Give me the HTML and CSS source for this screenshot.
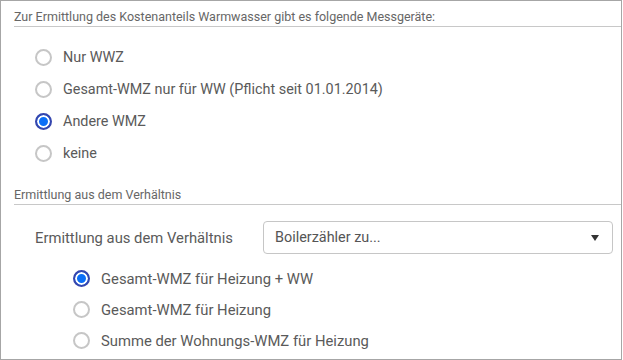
FILE: index.html
```html
<!DOCTYPE html>
<html lang="de">
<head>
  <meta charset="UTF-8" />
  <title>Messgeräte Warmwasser</title>
  <link rel="stylesheet" href="styles.css">
</head>
<body>
  <div class="panel">
    <div class="section-title">Zur Ermittlung des Kostenanteils Warmwasser gibt es folgende Messgeräte:</div>

    <div class="options">
      <label class="option"><input type="radio" name="geraet"> Nur WWZ</label>
      <label class="option"><input type="radio" name="geraet"> Gesamt-WMZ nur für WW (Pflicht seit 01.01.2014)</label>
      <label class="option"><input type="radio" name="geraet" checked> Andere WMZ</label>
      <label class="option"><input type="radio" name="geraet"> keine</label>
    </div>

    <div class="section-title second">Ermittlung aus dem Verhältnis</div>

    <div class="field-row">
      <label for="verhaeltnis" class="field-label">Ermittlung aus dem Verhältnis</label>
      <div class="select-wrap">
        <select id="verhaeltnis">
          <option>Boilerzähler zu...</option>
        </select>
      </div>
    </div>

    <div class="options sub">
      <label class="option"><input type="radio" name="basis" checked> Gesamt-WMZ für Heizung + WW</label>
      <label class="option"><input type="radio" name="basis"> Gesamt-WMZ für Heizung</label>
      <label class="option"><input type="radio" name="basis"> Summe der Wohnungs-WMZ für Heizung</label>
    </div>
  </div>
</body>
</html>
```

FILE: styles.css
```css
body {
  margin: 0;
  background: #fff;
  font-family: Roboto, "Liberation Sans", sans-serif;
  color: #5a5a5a;
}
.panel {
  width: 622px;
  height: 360px;
  box-sizing: border-box;
  border: 1px solid #a6a6a6;
  overflow: hidden;
}
.section-title {
  margin-left: 13px;
  padding-top: 9px;
  padding-bottom: 3px;
  font-size: 12.5px;
  line-height: 13px;
  color: #666;
  border-bottom: 1px solid #c8c8c8;
}
.section-title.second {
  margin-top: 10px;
}
.options {
  padding-left: 34px;
  margin-top: 14px;
}
.options.sub {
  padding-left: 72px;
  margin-top: 9px;
}
.option {
  display: flex;
  align-items: center;
  height: 32px;
  font-size: 14.4px;
  cursor: pointer;
}
.options.sub .option {
  height: 31px;
  font-size: 14.8px;
}
.option input {
  appearance: none;
  -webkit-appearance: none;
  width: 17px;
  height: 17px;
  margin: 0 11px 0 0;
  border: 2px solid #c6c6c6;
  border-radius: 50%;
  box-sizing: border-box;
  background: #fff;
}
.option input:checked {
  border-color: #3546ae;
  background: #0b6ff7;
  box-shadow: inset 0 0 0 2px #fff;
}
.field-row {
  display: flex;
  align-items: center;
  margin-top: 16px;
  padding-left: 34px;
}
.field-label {
  width: 228px;
  font-size: 14.8px;
}
.select-wrap {
  position: relative;
  width: 350px;
}
.select-wrap::after {
  content: "";
  position: absolute;
  right: 14px;
  top: 14px;
  border-left: 4px solid transparent;
  border-right: 4px solid transparent;
  border-top: 6px solid #333;
  pointer-events: none;
}
.select-wrap select {
  appearance: none;
  -webkit-appearance: none;
  width: 100%;
  height: 33px;
  padding: 0 11px;
  border: 1px solid #c6c6c6;
  border-radius: 4px;
  background: #fff;
  font-family: inherit;
  font-size: 14.4px;
  color: #555;
}
```
